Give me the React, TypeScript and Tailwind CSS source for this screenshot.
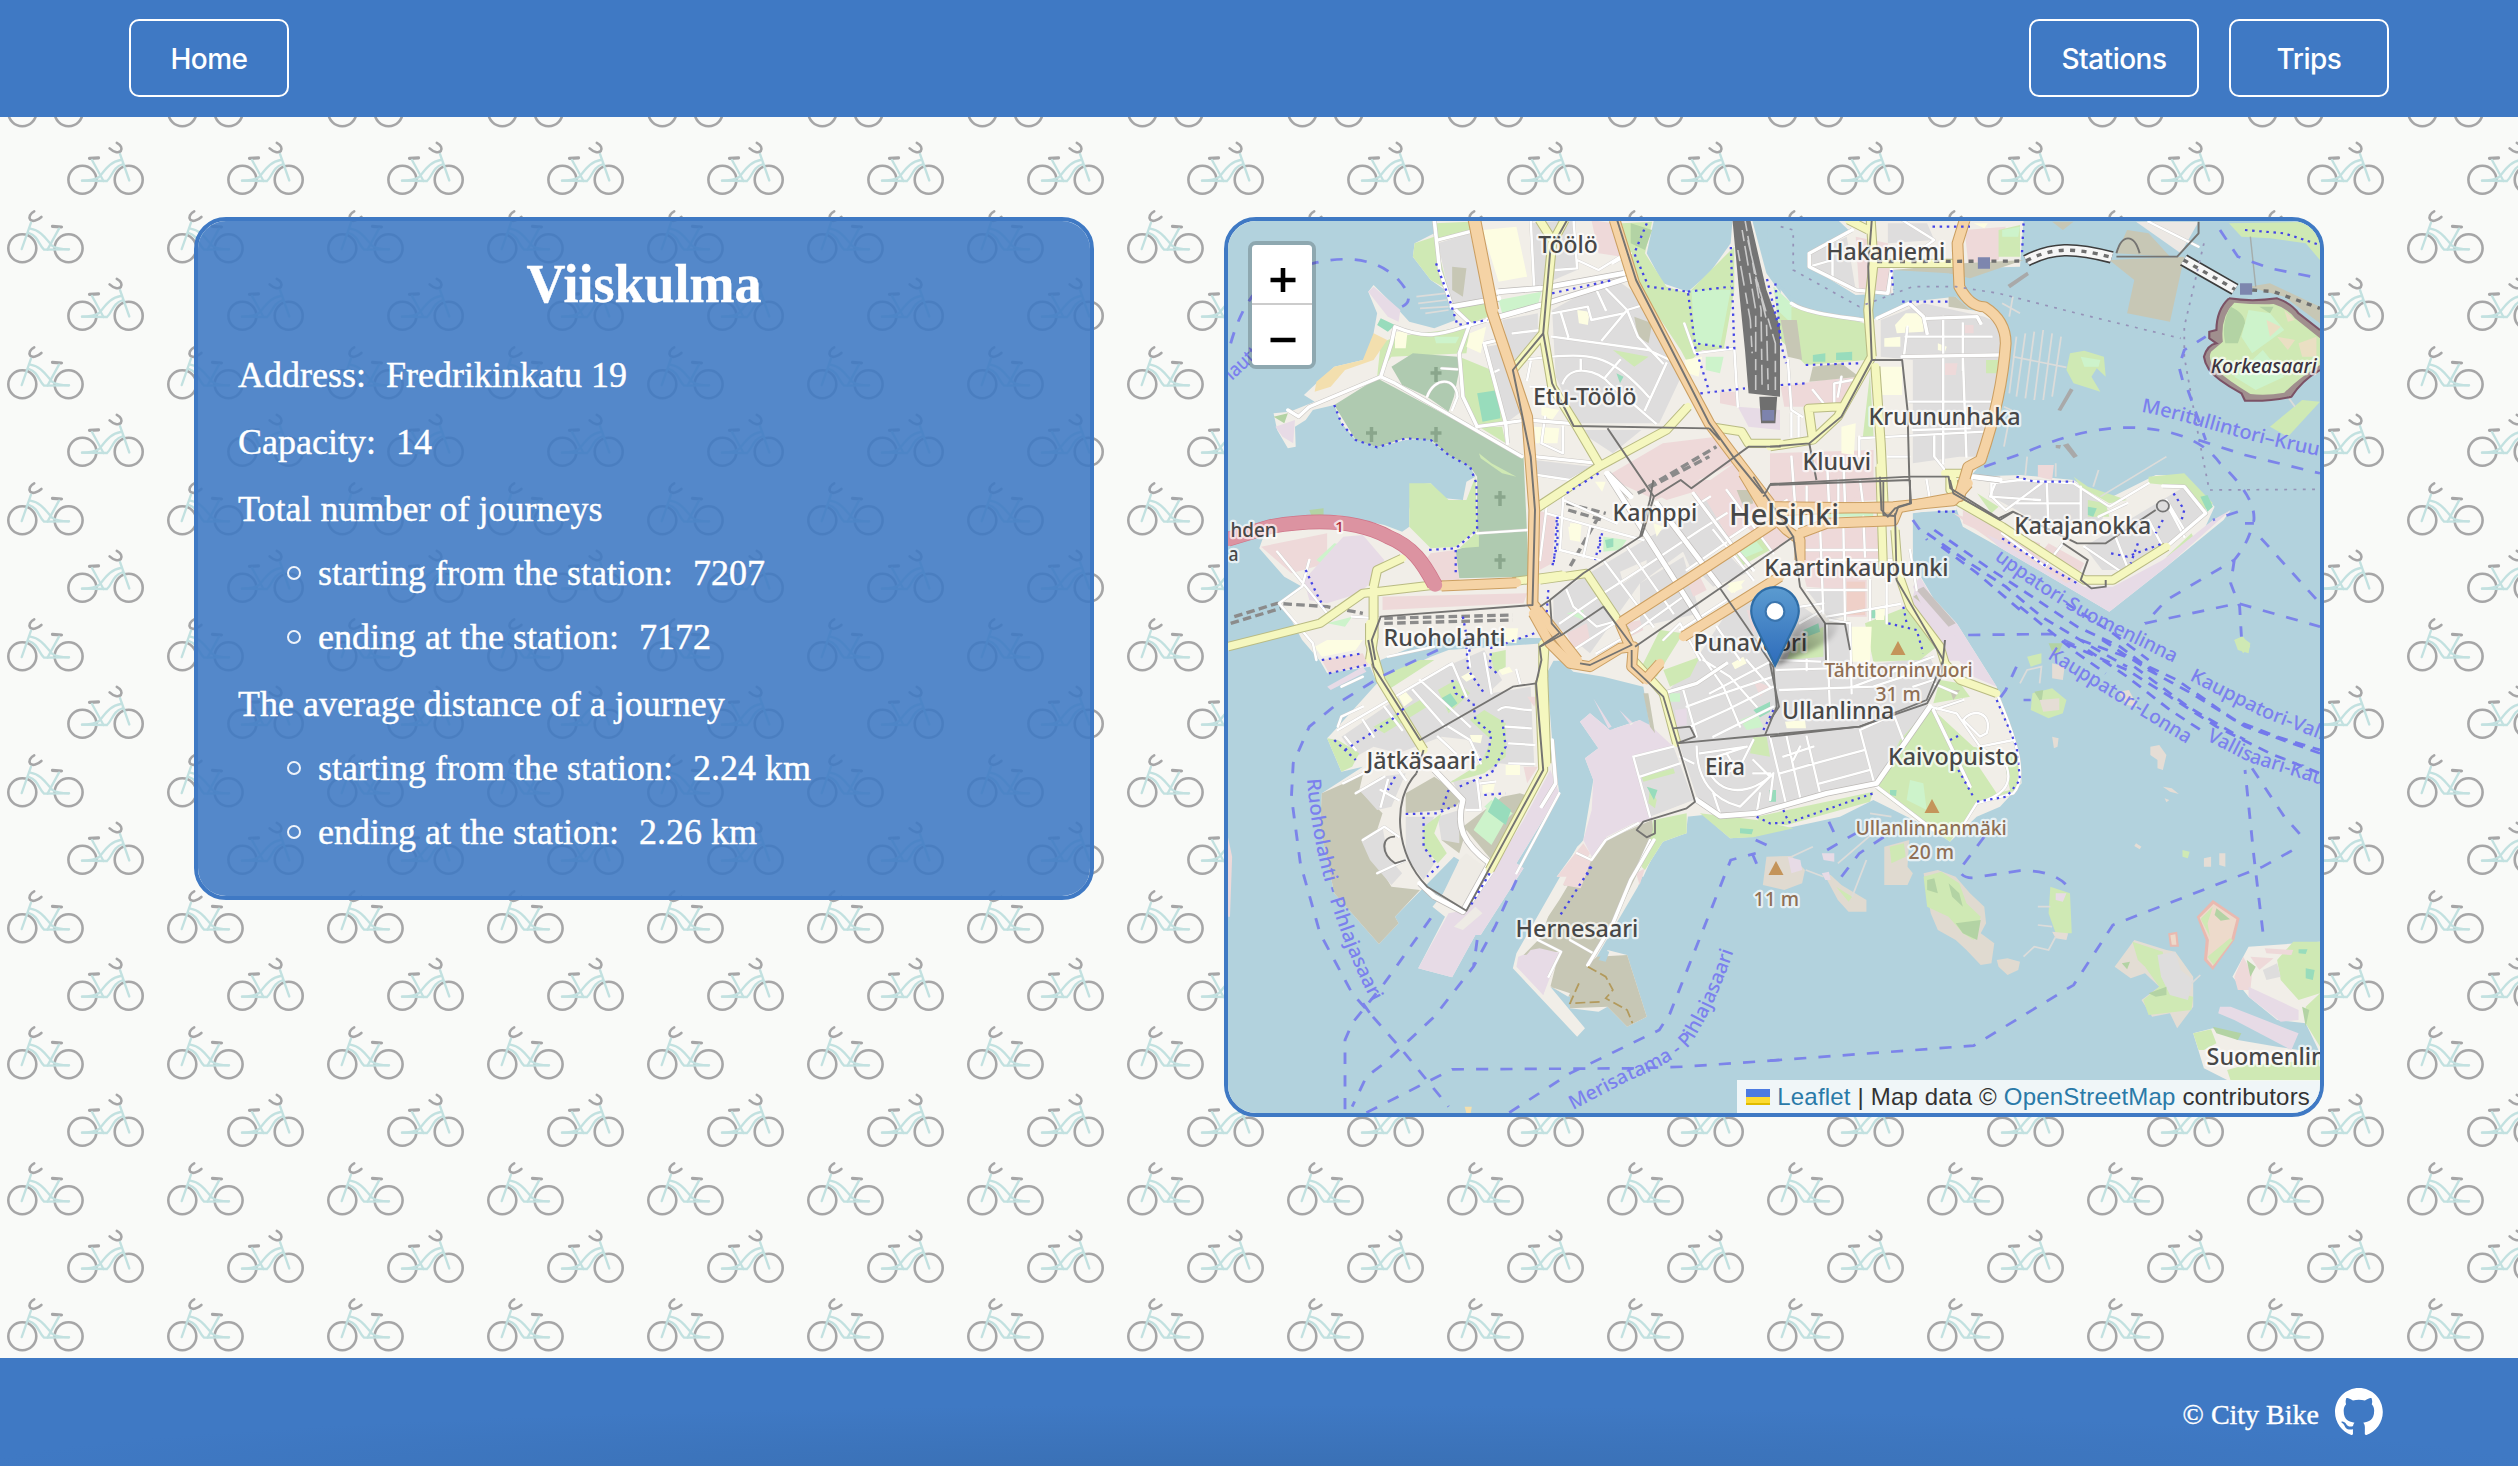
import React from "react";

/* ------------------------------------------------------------------ */
/* Bicycle wallpaper                                                   */
/* ------------------------------------------------------------------ */

function Bicycle({ transform }: { transform?: string }) {
  return (
    <g transform={transform} fill="none" strokeLinecap="round">
      <g stroke="#a6a6a7" strokeWidth="2.6">
        <circle cx="82.4" cy="43.7" r="14" />
        <circle cx="128.7" cy="43.7" r="14" />
        <path d="M89.5 22.4L98.5 21.8" strokeWidth="3.2" />
        <path d="M116.8 6.8C121 9 122.5 12.5 120.8 15C118.5 17.5 113.5 16 109.6 12.4" />
      </g>
      <g stroke="#c2e1e0" strokeWidth="2.3">
        <path d="M120 18L129.3 44.5" />
        <path d="M120.7 24C110 25.5 104.5 35 99 41C95 44 90 44.6 82 44.7" />
        <path d="M122 28.5C113 31 112.5 40 107 45L82 44.7" />
        <path d="M92 24L103.5 45" />
      </g>
    </g>
  );
}

function Wallpaper() {
  return (
    <svg className="absolute inset-0 h-full w-full" aria-hidden="true">
      <defs>
        <pattern id="bikes" x="0" y="-117" width="160" height="136" patternUnits="userSpaceOnUse">
          <rect width="160" height="136" fill="#f9faf8" />
          <Bicycle />
          <Bicycle transform="translate(151 68.6) scale(-1 1)" />
        </pattern>
      </defs>
      <rect width="100%" height="100%" fill="url(#bikes)" />
    </svg>
  );
}

/* ------------------------------------------------------------------ */
/* Map data: every sheet has its own local coordinate system           */
/* ------------------------------------------------------------------ */

type Sheet = "nw" | "ne" | "sw" | "se" | "c";
const SHEETS: Record<Sheet, string> = {
  nw: "translate(1220 210) scale(.35714 .33333)",
  ne: "translate(1770 210) scale(.35714 .33333)",
  sw: "translate(1220 640) scale(.35714 .33333)",
  se: "translate(1770 640) scale(.35714 .33333)",
  c: "translate(1540 480) scale(.33333)",
};

const WATER = "#b2d2dd";
const LAND = "#f1eee8";
const TOWN = "#dedddd";
const SHOP = "#eed9d9";
const PARK = "#cfe9b4";
const LAWN = "#cdf3cb";
const WOOD = "#b3d3a4";
const GRAVE = "#afcab0";
const PORT = "#e7dbe6";
const BARE = "#c7c7b5";
const PITCH = "#98dcbc";
const SCHOOL = "#fdfde2";
const SAND = "#f3dfae";

type Area = [Sheet, string, string];

const AREAS: Area[] = [
  // mainland
  ["nw", LAND, "M600 30L600 70 545 100 540 140 590 210 630 240 650 290 660 330 600 355 530 335 500 300 430 225 415 245 440 310 430 370 440 400 400 450 320 470 270 520 235 555 265 575 195 605 150 610 160 660 190 715 212 710 210 650 240 630 260 600 320 585 340 640 380 690 440 712 520 690 580 685 640 735 700 770 715 800 690 815 680 870 630 865 590 820 545 825 530 900 530 950 510 965 460 945 330 915 200 925 120 985 110 1015 180 1100 230 1130 165 1180 200 1230 230 1290 280 1352 1568 1352 1568 30Z"],
  ["c", LAND, "M0 -200L1240 -200 1250 90 1090 100 1100 190 1130 300 1250 430 1370 620 1440 830 1445 910 1380 980 1310 1010 1230 1085 1180 1050 1080 1000 1000 960 900 1010 760 1040 640 1070 570 1075 490 1005 440 1010 440 1060 360 1080 310 1190 50 1190 130 1080 160 900 135 835 175 805 120 725 150 700 210 750 300 720 340 800 310 620 190 590 100 575 30 510 0 470Z"],
  ["ne", LAND, "M190 30L220 60 110 130 110 170 240 255 345 250 345 180 700 170 710 30Z"],
  ["ne", LAND, "M0 200L60 280 140 310 250 335 300 325 390 275 520 260 560 300 640 310 670 370 670 450 640 600 610 740 560 800 700 795 850 810 940 870 1080 795 1160 795 1245 890 1215 960 1290 900 1270 930 1110 1070 950 1205 640 1010 540 950 520 890 400 910 400 1060 560 1352 0 1352Z"],
  ["sw", LAND, "M225 -40L300 100 420 80 440 130 330 260 300 295 340 395 400 380 285 460 280 560 320 760 445 912 500 850 490 830 655 650 670 660 640 740 595 800 630 830 555 985 650 1012 715 885 730 885 850 685 830 670 950 460 930 300 915 100 950 30 900 -40Z"],
  ["sw", LAND, "M1205 300L1115 270 1045 470 1025 595 1000 620 830 940 820 985 1000 1190 1022 1165 925 1040 980 1070 980 1105 1060 1115 1085 1100 1140 1160 1195 1130 1140 945 1085 930 1080 965 1055 950 1170 740 1190 690 1240 605 1305 580 1310 530Z"],
  ["nw", WATER, "M1215 30L1195 130 1240 220 1310 245 1370 190 1430 100 1435 30ZM1490 30L1530 190 1570 250 1570 30Z"],
  ["ne", WATER, "M-10 30L0 190 60 260 130 295 250 325 250 265 100 180 100 130 200 60 190 30Z"],
  ["sw", WATER, "M430 130L590 50 640 30 905 10 905 -6 600 -6 450 60ZM1045 170L1105 270 1090 280Z"],

  // town blocks, north-west
  ["nw", TOWN, "M610 100L700 70 745 260 650 290ZM870 40L985 30 1000 180 880 235ZM930 300L1100 200 1200 280 1300 480 1230 640 1000 640 940 500ZM745 410L800 400 850 600 800 640ZM790 330L890 310 890 370 820 460ZM1000 660L1180 660 1100 730ZM880 750L1040 770 980 810 890 800Z"],
  ["nw", SHOP, "M1040 30L1100 40 1125 140 1060 130ZM1400 545L1450 545 1450 590 1400 580ZM1080 800L1240 700 1390 680 1440 760 1220 870ZM890 900L940 920 930 1060 895 1080ZM560 1070L590 1030 660 1020 670 1110 600 1115ZM455 1160L860 1150 850 1180 455 1200ZM115 1010L300 970 300 1060 200 1090ZM1320 850L1440 760 1520 870 1380 960Z"],
  ["nw", PARK, "M600 40L700 35 700 65 610 85ZM545 100L600 80 640 240 590 210 540 140ZM650 280L740 270 750 320 700 340ZM490 380L700 350 690 430 480 440 440 500 450 400ZM670 440L760 480 800 640 720 650 680 560ZM1125 40L1210 35 1190 130 1250 230 1310 250 1440 110 1440 240 1410 420 1350 420 1310 460 1290 420 1160 210ZM530 820L590 820 640 870 690 870 715 800 720 960 660 1010 590 1015 530 950ZM1100 420L1200 440 1160 470ZM725 650L790 650 800 700Z"],
  ["nw", LAWN, "M780 270L900 245 890 285 790 310ZM1320 240L1430 240 1400 410 1330 400ZM270 1050L320 1000 345 1005 290 1065ZM600 380L670 380 660 400 605 400ZM1360 440L1410 440 1400 490 1360 480ZM300 1240L370 1220 350 1250Z"],
  ["nw", WOOD, "M1150 40L1210 60 1190 120 1150 100ZM250 900L290 895 290 915 255 915ZM150 620L190 610 180 640ZM760 130L810 120 835 190 790 170Z"],
  ["nw", GRAVE, "M480 470L540 430 665 440 670 480 655 560 640 605 580 560 510 525ZM320 585L440 505 850 740 865 1100 670 1105 660 1020 720 1000 720 800 700 770 640 735 590 690 520 685 440 712 380 690Z"],
  ["nw", PARK, "M725 730L760 760 830 800 790 790 730 745ZM670 1015L725 960 725 1010Z"],
  ["nw", SAND, "M430 370L468 390 430 450 350 480 310 530 265 545 270 515 320 470 400 450Z"],
  ["nw", PORT, "M430 230L505 300 500 335 470 320 415 245ZM235 1110L345 980 400 975 460 1050 430 1110 390 1150 300 1180 250 1170ZM155 650L210 630 205 700 175 680ZM1450 590L1568 600 1568 660 1480 650Z"],
  ["nw", PITCH, "M720 550L780 540 785 625 735 635ZM450 325L490 345 470 365 440 345ZM1110 490L1130 500 1120 520Z"],
  ["nw", SCHOOL, "M735 60L830 50 860 200 780 215ZM490 365L525 365 520 415 490 415ZM700 370L745 350 730 430 690 410ZM880 650L950 655 945 700 885 700ZM900 590L950 600 930 630 900 615ZM1300 450L1350 440 1340 500 1310 490ZM1000 300L1035 305 1030 345 1005 340ZM975 950L1010 950 1005 990 980 990ZM800 1255L835 1255 830 1300 795 1295ZM1420 1120L1470 1110 1440 1150ZM1050 815L1080 815 1070 845Z"],
  ["nw", BARE, "M650 170L690 175 680 260 650 240ZM1160 320L1210 340 1200 400 1170 380Z"],

  // central districts
  ["c", TOWN, "M130 290L330 170 640 0 640 60 300 310 150 520 40 430 40 350ZM300 310L430 230 480 400 300 440ZM380 640L480 520 560 400 700 320 860 430 930 430 940 560 1170 530 1200 600 1160 660 1160 700 1010 900 860 940 740 980 640 1000 540 1000 470 950 420 800ZM280 830L400 800 460 960 330 1010ZM800 330L910 330 910 410 870 420Z"],
  ["c", TOWN, "M390 130L500 60 570 180 450 260ZM480 280L560 220 620 280 520 320Z"],
  ["c", SHOP, "M340 40L480 0 640 0 760 160 700 220 620 140 570 180 480 30 380 60ZM740 0L1010 0 1010 60 740 80ZM790 150L1010 140 1020 240 920 330 800 320 780 240ZM920 300L980 300 980 410 920 410ZM80 460L140 430 150 480 100 510ZM255 430L300 420 310 450 270 470ZM440 300L480 290 500 330 460 350ZM620 390L680 400 640 460ZM1240 100L1500 190 1500 260 1380 200ZM640 600L690 620 660 650ZM50 1190L130 1090 150 1120 110 1190Z"],
  ["c", PARK, "M580 210L650 160 690 210 610 255ZM975 430L1100 380 1190 500 1140 540 1000 545ZM1170 680L1300 800 1440 830 1430 930 1310 970 1230 1085 1010 930 1080 780ZM650 1010L1000 935 990 965 740 1035 660 1030ZM480 1000L650 1020 760 1045 640 1072 570 1075ZM340 1020L440 1000 440 1060 360 1080 310 1160ZM360 450L430 460 380 540 350 590 300 570ZM1200 600L1260 610 1290 650 1180 670ZM640 770L680 770 690 830 630 820ZM370 570L480 530 450 590 390 620ZM760 490L850 440 850 530 740 540Z"],
  ["c", LAWN, "M590 215L650 185 670 210 610 235ZM1110 900L1150 910 1160 990 1100 960ZM600 720L650 700 670 740 620 750ZM390 640L420 640 420 665 390 665ZM190 170L260 180 240 210 190 215ZM80 400L130 390 130 420ZM860 95L1000 95 1000 110 860 110ZM335 845L370 840 360 860Z"],
  ["c", PITCH, "M640 690L690 665 690 695 660 712ZM790 450L835 430 840 455 800 470ZM600 1045L640 1048 635 1063 600 1060ZM1050 930L1070 930 1068 948 1050 945ZM195 180L220 175 220 200 200 205ZM688 930L708 930 708 965 688 965ZM990 385L1010 385 1005 415 990 415ZM335 930L350 930 345 950Z"],
  ["c", SCHOOL, "M930 440L995 440 990 545 930 545ZM1005 385L1035 385 1032 420 1008 420ZM575 550L610 530 620 550 585 568ZM735 725L795 720 798 745 740 745ZM560 325L600 305 608 325 575 340ZM90 130L125 130 120 185 90 180ZM340 130L370 140 350 170Z"],
  ["c", PORT, "M340 1020L330 1000 280 830 400 800 330 735 300 720 210 750 150 700 120 725 175 805 135 835 160 900 155 990 130 1080 160 1140 200 1070 280 1030ZM1130 310L1250 430 1370 620 1300 590 1210 490 1110 380ZM405 690L440 685 440 735 410 740ZM160 655L215 740 205 745ZM238 690L280 730 272 736Z"],
  ["c", TOWN, "M282 832L400 802 458 960 330 1008Z"],
  ["c", PARK, "M305 890L400 865 405 880 310 905ZM330 920L350 960 345 985 325 970Z"],
  ["c", BARE, "M1120 350L1150 330 1225 410 1210 420ZM1230 630L1260 630 1240 660ZM310 640L325 640 345 760 330 740ZM590 30L630 30 640 70 610 80Z"],
  ["c", "#efd0c8", "M920 305L975 305 975 405 920 405Z"],
  ["c", LAND, "M1240 700L1330 660 1400 730 1390 790 1320 790ZM1310 850L1390 830 1410 930 1370 940ZM240 275L320 240 320 260 250 310Z"],

  // north-east
  ["ne", TOWN, "M115 130L215 80 240 240 120 175ZM330 40L440 40 460 90 330 100ZM310 330L430 280 600 320 640 340 650 440 600 740 530 740 400 760 400 450 310 440ZM620 815L700 810 850 820 940 890 930 930 780 960 690 900 620 860ZM880 1010L1160 830 1220 900 1100 1020 1000 1080 930 1080Z"],
  ["ne", SHOP, "M240 80L330 100 340 250 250 250ZM545 60L660 50 640 150 555 160ZM0 730L290 720 290 860 0 880ZM150 510L250 500 190 590 40 590 30 530ZM490 460L525 460 520 495 490 495ZM545 345L570 345 570 370 545 370ZM750 765L795 765 790 810 750 800Z"],
  ["ne", PARK, "M10 230L60 290 250 335 290 350 270 450 100 465 30 390ZM640 60L700 45 700 140 640 140ZM1060 800L1160 790 1240 880 1215 900 1160 830 1060 820ZM850 800L890 830 1000 870 950 880 870 830ZM580 850L640 890 620 910ZM1110 1040L1180 970 1190 990 1130 1050ZM280 490L260 680 290 680ZM840 430L880 422 935 440 940 500 915 475 900 500 925 545 850 520 830 480ZM605 450L640 450 635 490 605 490ZM890 870L940 880 950 920 890 920Z"],
  ["ne", LAWN, "M650 60L700 50 695 80 650 80ZM870 440L925 450 920 470 880 470ZM10 230L60 280 60 340 20 300Z"],
  ["ne", PITCH, "M120 435L155 430 155 455 120 455ZM185 428L230 425 230 450 185 450ZM1205 860L1225 855 1240 890 1225 905ZM890 890L915 895 905 920 890 915Z"],
  ["ne", SCHOOL, "M350 345L380 310 430 310 430 365 355 370ZM310 470L370 470 370 555 310 555ZM320 385L365 380 365 410 320 410ZM200 650L240 640 235 735 200 730ZM470 400L495 410 490 425 470 420ZM570 40L610 40 600 55Z"],
  ["ne", BARE, "M950 150L1160 140 1120 335 1000 310 1020 210ZM345 180L540 160 710 150 560 205 500 190ZM120 470L200 460 250 500 110 515ZM970 130L1000 60 1060 70 1120 140ZM1340 230L1400 220 1540 290 1540 340 1440 260ZM500 260L520 260 560 300 500 290ZM790 35L850 35 820 60ZM30 330L75 330 90 450 50 440Z"],
  ["ne", "#ece8e4", "M1025 35L1200 35 1150 130Z"],
  ["ne", "#a9a9a9", "M665 225L720 185 725 195 672 235ZM805 600L840 535 850 540 815 603ZM820 705L835 700 862 738 850 745ZM800 705L815 705 812 716 800 714Z"],
  ["ne", PORT, "M560 920L640 1010 950 1205 1110 1070 1290 900 1240 930 1100 1050 960 1130 880 1130 700 1010 600 940ZM420 1100L560 1352 500 1352 400 1130Z"],
  ["ne", SHOP, "M540 900L640 960 770 1060 850 1110 830 1120 640 990 540 940ZM780 1000L880 1060 860 1100 750 1040Z"],
  ["ne", PARK, "M1285 40L1540 35 1540 150 1500 100 1400 85 1320 80ZM1400 650L1490 570 1540 575 1450 680ZM1300 1290L1320 1280 1345 1300 1340 1330 1310 1320Z"],
  ["ne", "#c9c2c0", "M410 1140L430 1130 520 1240 500 1250Z"],

  // Korkeasaari
  ["ne", "#a08f8e", "M1285 265Q1350 276 1420 265Q1460 280 1480 310L1540 360 1540 480Q1490 510 1460 560Q1400 575 1330 572L1320 550Q1285 530 1260 510Q1220 480 1215 440Q1225 405 1250 400L1230 385 1230 365 1250 360Q1250 300 1285 265Z"],
  ["ne", PARK, "M1300 278Q1360 284 1410 282Q1450 295 1470 325L1540 385 1540 465Q1480 505 1440 548Q1390 558 1345 552Q1280 510 1245 475Q1225 445 1235 425L1268 395Q1260 320 1300 278Z"],
  ["ne", WOOD, "M1290 290Q1330 310 1330 340L1310 400 1275 400Q1262 340 1290 290ZM1370 290L1410 290 1400 310ZM1250 450L1290 480 1270 485Z"],
  ["ne", LAWN, "M1340 300L1400 310 1440 360 1350 430 1320 380ZM1380 420L1440 500 1360 540 1300 500Z"],
  ["ne", "#eadfc3", "M1390 330L1430 350 1400 380ZM1420 380L1470 390 1450 420ZM1440 300L1470 330 1450 335ZM1480 400L1530 380 1530 440 1490 440Z"],

  // Jätkäsaari and Ruoholahti
  ["sw", BARE, "M285 460L400 405 390 450 455 520 440 570 400 600 480 740 560 750 490 830 500 850 445 912 320 760 280 560ZM520 460L600 410 680 470 660 500 620 510 520 520ZM520 220L550 200 590 250 570 280ZM790 470L840 460 870 470 760 660 690 570 670 640 620 600 680 560Z"],
  ["sw", TOWN, "M340 290L640 70 760 160 870 140 880 380 780 370 760 400 700 300 620 290 500 340 430 320 380 350ZM560 120L610 90 740 30 790 120 680 230ZM390 450L450 410 520 400 480 500 440 510ZM520 530L600 530 570 600 600 670 570 720 520 650ZM395 600L455 560 470 650 510 700 480 735 420 660ZM610 530L670 510 670 610 620 600ZM650 420L720 420 730 510 690 510Z"],
  ["sw", SHOP, "M285 60L400 40 415 75 305 100ZM850 380L890 380 860 430ZM860 170L890 170 880 200Z"],
  ["sw", PARK, "M300 295L330 300 390 340 370 380 340 395ZM740 210L800 250 800 350 740 400 640 430 730 370 760 300 700 240ZM570 560L620 520 600 580 635 640 610 670 570 620ZM430 260L560 180 580 200 460 280ZM610 150L660 120 700 160 640 220ZM755 40L800 30 800 80 770 100ZM450 110L560 60 600 60 470 150Z"],
  ["sw", LAWN, "M710 570L750 500 800 540 760 615ZM760 480L820 520 800 540 740 500Z"],
  ["sw", PITCH, "M620 175L645 160 665 190 640 210ZM770 470L815 510 800 555 750 515ZM1195 440L1225 450 1215 480Z"],
  ["sw", SCHOOL, "M265 20L300 0 400 0 380 30 285 50ZM500 170L520 155 540 180 515 200ZM700 285L735 285 730 310 705 305ZM675 110L700 95 715 110 690 125ZM800 375L840 375 840 405 800 405ZM735 435L770 430 765 455 735 460ZM780 90L810 80 820 95 790 105Z"],
  ["sw", PORT, "M830 670L950 460 925 390 850 540 760 700 720 740 690 810 640 820 555 985 650 1012 715 885 730 885 850 685ZM300 140L400 80 410 95 310 150ZM835 950L900 925 950 940 905 1065 830 980Z"],
  ["sw", "#eeebe5", "M690 640L740 680 680 800 620 770 670 660ZM655 860L715 800 735 820 680 870Z"],
  ["sw", BARE, "M1080 600L1210 540 1215 600 1100 850 1030 975 1055 950 1140 945 1195 1130 1140 1160 1085 1100 980 1105 980 1070 925 1040 950 935 850 945 900 890 940 760 1040 660Z"],
  ["sw", LAND, "M925 1040L980 1060 975 1070 920 1035ZM895 830L940 740 975 735 950 780 900 860Z"],
  ["sw", PORT, "M895 925L955 940 920 1010 905 1065 835 975 870 930Z"],
  ["sw", WATER, "M1060 960L1075 930 1090 935 1080 965Z"],
  ["sw", SHOP, "M960 735L1000 640 1040 660 1010 745ZM1165 700L1190 685 1175 735ZM22 590L34 650 28 830 22 830Z"],
  ["sw", PARK, "M1215 560L1305 530 1305 580 1240 605 1190 690 1180 680Z"],
  ["sw", SAND, "M685 1400L705 1400 702 1420 690 1420Z"],

  // southern archipelago
  ["se", "#e0dad0", "M430 700L470 690 520 710 560 760 600 800 605 850 590 880 628 910 620 970 590 975 550 930 520 900 470 870 450 820ZM635 960L665 955 700 965 695 990 665 1005 640 980ZM320 620L390 600 385 680 400 700 385 735 320 735ZM-10 650L60 648 98 690 90 730 40 750 -20 735ZM150 700L170 705 200 735 270 780 270 815 220 815 190 780Z"],
  ["se", PARK, "M430 710L480 695 530 730 550 790 590 830 570 900 540 880 500 830 440 800ZM335 620L375 610 380 650 340 670ZM185 740L230 770 220 785ZM785 740L840 760 845 880 800 880 780 820ZM735 160L790 145 830 180 820 220 780 235 730 210ZM720 50L760 40 760 70 730 80Z"],
  ["se", WOOD, "M440 720L460 715 470 760 440 750ZM520 850L590 840 580 900 540 880ZM500 730L530 760 540 800 510 770ZM740 155L765 150 760 190ZM780 10L820 10 800 60Z"],
  ["se", PORT, "M50 650L85 660 90 690 60 700ZM145 640L180 640 180 665 150 660ZM145 700L165 695 170 720 155 720ZM800 760L830 760 820 785 800 780Z"],
  ["se", "#e5ddd5", "M790 70L825 80 820 120 790 115ZM755 180L810 175 810 210 765 215ZM790 290L808 295 805 320 795 325ZM1065 320L1090 315 1110 345 1100 390 1085 385 1085 360 1065 345ZM1025 610L1040 620 1035 628 1020 618ZM1215 655L1235 650 1235 680 1215 680ZM1258 640L1275 640 1275 680 1258 675ZM1105 475L1118 480 1110 487ZM790 875L835 880 830 900 800 895ZM975 155L1005 150 1030 200 1000 195ZM1100 440L1125 445 1145 462 1120 455Z"],
  ["se", PARK, "M1155 630L1175 635 1170 655 1155 650ZM1300 0L1325 -10 1345 20 1325 40Z"],
  ["se", "#e3ddd4", "M965 980L1020 900 1110 930 1135 935 1185 1010 1185 1100 1140 1165 1120 1120 1070 1130 1040 1080 1090 1040 1050 1000 1010 1015Z"],
  ["se", PARK, "M1015 905L1100 935 1100 1000 1140 1060 1185 1070 1180 1110 1060 1125 1045 1080 1090 1040 1050 980 1030 960Z"],
  ["se", TOWN, "M1085 945L1135 935 1150 990 1185 1020 1170 1080 1120 1065 1095 1010Z"],
  ["se", WOOD, "M1060 1060L1110 1040 1110 1065 1080 1070ZM985 970L1008 965 1000 988Z"],
  ["se", "#e9b9b0", "M1195 830L1240 780 1315 835 1300 900 1240 990 1215 960 1220 900ZM1115 880L1140 875 1145 920 1120 920Z"],
  ["se", "#eddacb", "M1203 833L1242 792 1306 838 1292 896 1240 978 1224 958 1229 900ZM1121 886L1135 883 1138 914 1125 914Z"],
  ["se", WOOD, "M1250 805L1288 838 1262 842 1245 825Z"],
  ["se", PARK, "M1206 836L1240 800 1225 850 1232 890ZM1225 950L1288 895 1296 900 1242 975Z"],
  ["se", LAND, "M1295 1010L1340 920 1540 905 1540 1240 1500 1150 1420 1140 1340 1070ZM1185 1180L1240 1165 1310 1200 1420 1220 1540 1240 1540 1320 1280 1320 1215 1285Z"],
  ["se", PARK, "M1420 960L1465 905 1540 905 1540 1060 1480 1080 1430 1020ZM1185 1180L1235 1168 1250 1210 1215 1230 1200 1230ZM1280 1290L1330 1275 1540 1260 1540 1322 1290 1322ZM1500 1100L1540 1060 1540 1220 1500 1150Z"],
  ["se", SHOP, "M1300 1010L1325 950 1350 1000 1345 1050 1310 1050ZM1345 950L1410 955 1370 990ZM1385 925L1465 930 1460 945 1390 940Z"],
  ["se", PORT, "M1260 1100L1290 1100 1480 1180 1460 1230 1300 1140 1255 1120ZM1340 1040L1480 1110 1480 1140 1430 1145 1340 1070Z"],
  ["se", TOWN, "M1380 990L1420 970 1430 1010 1390 1020Z"],
  ["se", PITCH, "M1500 985L1525 990 1520 1020 1500 1015ZM1480 928L1505 928 1500 942 1480 940Z"],
  ["se", WOOD, "M1240 1160L1320 1180 1310 1200 1250 1180ZM1335 960L1360 980 1345 1010ZM1490 1100L1510 1110 1500 1160Z"],
];

type RoadKind = "motorway" | "primary" | "secondary" | "avenue" | "street" | "lane";
const ROAD_STYLE: Record<RoadKind, { core: string; edge: string; w: number; pad: number }> = {
  lane: { core: "#ffffff", edge: "#cfcdcb", w: 7, pad: 2 },
  street: { core: "#ffffff", edge: "#c9c6c3", w: 10, pad: 3 },
  avenue: { core: "#ffffff", edge: "#bdbab7", w: 15, pad: 4 },
  secondary: { core: "#f5f7bf", edge: "#b9bb83", w: 22, pad: 6 },
  primary: { core: "#f5d3a5", edge: "#cb9f62", w: 27, pad: 6 },
  motorway: { core: "#dc93a1", edge: "#cf7488", w: 40, pad: 4 },
};
const ROAD_ORDER: RoadKind[] = ["lane", "street", "avenue", "secondary", "primary", "motorway"];

const ROADS: [Sheet, RoadKind, string][] = [
  ["nw", "street", "M600 30L615 180 650 290 700 340 670 430 680 560 720 650"],
  ["nw", "avenue", "M650 290L780 265M780 245L900 235 1130 190M750 330L900 285 1140 205"],
  ["nw", "street", "M750 330C640 360 600 400 490 350L480 400 450 500 250 590 220 620 190 600M450 500L490 520 845 740M720 650L860 630 980 640M740 400L760 480 800 640 805 700M740 400L780 390M880 740L1060 760M610 90L700 65"],
  ["nw", "lane", "M580 560C600 500 660 500 665 560L650 600M870 30L880 240M990 30L1000 175 940 180M1000 150L1060 180 1120 140M930 310L1030 290 1040 330 1130 310M930 380L1200 420 1280 460M955 310L975 380M1080 235L1140 300 1070 390M1140 300L1200 280M1140 300L1170 380 1240 460M930 440C1050 430 1100 440 1200 560M960 520C980 460 1060 480 1090 520L1220 640M1250 460L1190 600M860 790L980 810 1060 760M720 970L860 960M870 530L930 530M620 475L665 478M1120 450L1080 500M760 490L780 480M820 370L900 360M840 450L930 440M910 620L900 700 960 730 960 650M1300 340L1330 430 1440 415 1450 590M870 455L860 510M1010 450L1010 480M160 1025L240 1130 300 1210M165 1180L230 1130 250 1050M165 1180L260 1300 270 1350M370 1220L450 1225M1150 130L1100 160M1050 230L1080 300"],
  ["nw", "avenue", "M1085 790L1150 860"],
  ["nw", "secondary", "M965 30L930 100 905 370 820 480M905 370L930 530 1000 650 1060 760M895 30L930 90M890 890L1060 770 1250 660 1310 590M22 1310L280 1240 400 1150 600 1125 640 1128M430 1140L430 1280 420 1350M430 1130L440 1080 510 1045M1370 650L1460 665 1480 700 1570 700M820 1115L960 1095"],
  ["nw", "primary", "M710 30L760 300 860 620 880 900 875 1180 1000 1350M715 30L765 300M1105 30L1160 220 1370 640 1440 740 1540 880M620 1128L830 1118"],
  ["nw", "motorway", "M22 988L140 950C300 920 400 940 470 980C540 1010 570 1060 602 1125"],

  ["c", "avenue", "M200 -20L340 200 480 420M350 70L540 320M470 960L540 1008 650 1000 860 940 1010 910 1170 680M1300 -10L1380 0"],
  ["c", "street", "M460 40L580 200 640 270M1010 920L1180 1050M370 640L470 610 560 550M1180 690L1290 920"],
  ["c", "lane", "M60 430L190 340 330 250 480 150 560 100M170 520L290 450 430 350M100 510L270 400M400 120L510 50M190 240L340 440M80 330L100 380 170 440 240 420M230 130L70 60M260 200L400 400M440 270L570 180M560 180L740 60M520 150L640 300M560 30L700 220M20 100L160 140 310 180M150 140L130 230M60 210L180 240M70 50L60 210M0 240L20 80M1370 0L1350 50 1500 60M370 480L420 430 480 540M480 520L550 620 600 740M510 640L700 540M440 680L520 650 700 590M450 740L560 690 700 620M430 630L470 770M490 540L570 590 650 680M620 540L690 620M520 770L700 680M530 440L600 540M420 450L560 360"],
  ["c", "lane", "M710 570L870 565M720 630L1000 620 1180 560M940 620L1180 530M860 430L870 700M930 430L935 640M800 540L800 570M720 540L840 545M690 770L740 980M740 770L780 950M800 770L840 940M720 880L825 850 975 810M840 910L990 870M730 830L820 800M960 750L1000 900M1060 700L1090 780M640 780L600 860M560 820C600 880 560 900 530 830L620 800M470 800C470 900 520 960 600 980L690 890 640 840M500 860C540 960 640 940 700 880M640 880L690 880M480 820L620 800M540 1000L520 940M660 940L650 1000M700 880L690 960M460 850L420 830M760 840L780 800M1070 700L960 750M1120 620L1180 600"],
  ["c", "lane", "M1170 680L1250 700 1320 800 1400 860C1420 920 1380 950 1310 970L1260 1050M1370 640C1440 800 1460 900 1420 940L1310 970M1270 720C1300 680 1360 700 1340 760L1320 770 1270 720M1180 690L1270 660M1320 800L1420 780M1180 610L1250 640M840 130L850 400M970 110L975 230M910 130L915 420M780 210L1020 210M850 240L1080 240M800 330L980 330M990 300L990 420M1040 300L1040 430M860 410L1080 372M800 20L800 80M895 0L895 70M960 0L970 80M1160 0L1170 60M780 380L850 370M870 420L930 430M280 830L400 800M300 890L420 850M280 830L330 1010M330 1080L280 1190M1110 210L1130 330M780 430L850 390"],
  ["c", "secondary", "M0 300L140 280 260 460M-10 85L90 20M1020 -40L1025 120 1030 270M1065 150L1075 280 1110 380 1200 500 1215 550 1260 600 1370 640M280 540L370 640 410 790M15 490L10 570 15 700 20 850M1240 0L1240 40"],
  ["c", "primary", "M245 425L440 300 700 130M320 595L360 550M430 470L560 390 720 290M-20 400L30 490 90 550 150 560 240 505 280 500 275 560 320 600M610 -20L670 80 740 150 780 180 780 240M240 430L270 500M720 92L880 85 1060 80 1240 62 1285 10M780 160L860 130 1060 122 1075 85"],

  ["sw", "lane", "M345 430L420 390M380 460L460 410M330 270L650 70 690 170M400 240L430 290M460 200L510 270M540 150L630 260M560 120L700 260M610 290L660 340M740 40L760 160M640 260L700 300 730 370M780 210C800 190 820 210 870 210M800 260L870 265M810 310L880 315M810 370L880 372M330 260L340 230 400 200M350 290L380 330M500 390L520 420M450 450L500 480M470 420L450 500M720 420L730 510 690 510M730 430L770 425M400 600L460 560 500 590M440 700L520 660M830 90L840 130M690 0L700 80M470 50L600 20M690 810L760 700M1000 640L1040 660 1080 600 1170 550M890 900L955 935 920 1010M980 900L1045 940M340 140L400 110M950 460L830 700"],
  ["sw", "street", "M1215 600L1150 720 1100 850 1030 975M930 300L940 430 900 500"],
  ["sw", "avenue", "M600 390L680 480C660 560 680 610 755 670L680 815 600 770 560 730"],
  ["sw", "secondary", "M420 -50L420 10 450 120 570 330M905 10L905 110 895 130 905 390 755 690"],

  ["ne", "street", "M370 440L640 435M60 280C100 310 200 320 260 330M300 325L390 280 430 320 440 370M440 325L580 320 590 340M110 130L110 170 240 240 330 250 340 180M230 60L110 130"],
  ["ne", "lane", "M485 320L485 760M540 340L540 480M380 380L620 380M390 575L620 575M540 440L550 740M250 685L600 665M400 660L560 655M460 680L460 740 490 780M385 350L375 440M175 100L175 200M370 30L460 90 420 120M110 170L175 150M250 680L250 740M160 760L165 880M60 740L70 880M205 740L210 880M330 740L390 740M60 610L60 680M120 540L150 580M620 820L700 810 850 820 950 890 1060 820M760 820L660 900 620 860 620 820M775 820L780 960M870 830L870 930M690 880L870 880M960 960L1000 1070M1120 900L1160 980M1060 930L1100 1010M880 1010L990 1090M650 970L770 1070 820 1000M1000 880L920 920M1060 35L1200 110M80 680L80 620M230 510L180 520 180 590M200 500L190 560M50 450L60 600 90 620M1160 960L1110 870"],
  ["ne", "street", "M1100 828L1160 830 1220 910 1110 1010"],
  ["ne", "secondary", "M220 30L275 60M282 30L290 160 275 300 285 440M290 160L515 160M285 440L190 620 120 690 0 710M120 690L108 595 200 590M295 470L310 700 318 880M490 790L540 790M505 800L505 840 530 860M520 870L650 950 880 1110 960 1110 1110 1010"],
  ["ne", "primary", "M545 30L525 100 530 230Q560 290 600 290Q660 330 660 400Q650 560 590 750L555 770 530 860 350 895 0 890"],
];

const TRAMS: [Sheet, string][] = [
  ["nw", "M1112 30L1165 210 1370 640 1440 745 1520 850M972 30L925 120 905 370 820 480 870 740 882 900 875 1185 450 1220 425 1290 435 1350M905 370L930 520 990 648 1370 655M1085 655L1215 860 1195 930 1180 980M1215 860L1290 810 1320 835 1480 710 1570 710M1370 655L1400 690"],
  ["c", "M0 380L30 360 130 280 300 170 330 60 340 0M30 360L35 430 65 465 190 380 275 495 150 555 120 550M0 500L70 462M285 500L540 325 760 170 640 -10M760 170L780 320 855 430 858 540M540 325L620 440 700 560 710 680 675 765M410 790L680 765 960 740 1160 660 1210 540 1070 300 1065 100M275 510L275 560 370 650 400 750 465 965 440 985 310 1025 290 1050 320 1072 345 1060 345 1020M1030 0L1030 105 1065 108 1075 80 1110 70 1110 0M670 50L690 15 1110 0M855 430L915 432 930 510M400 745L450 740 465 770 410 790M1230 0L1240 40 1380 120 1420 95"],
  ["sw", "M550 400C480 480 490 640 580 740L690 812 905 390 885 130 820 140 560 300 430 80 415 0M570 330L550 400M490 590C450 590 450 640 490 670L520 660M885 130L900 60 895 20 950 -20"],
  ["ne", "M285 30L275 170 285 450 370 450 385 600 390 800 500 800 505 835 640 925 680 905 860 1000 940 1000 1080 900M285 450L200 620 110 700 0 710M110 700L130 810M0 822L390 800 395 880 350 895 330 920 312 900 308 800M820 1000L890 1050 870 1110 900 1135 940 1130 940 1110M970 140L1140 140 1200 70 1200 35M970 130C985 70 1020 70 1035 130"],
  ["se", "M490 0L480 110 440 190 250 260 0 290M0 70L25 200 0 240"],
];

const FOOTPATHS: [Sheet, string][] = [
  ["nw", "M320 585L340 640 380 690 440 712 520 685 590 690 640 735 700 770 718 820 720 960 660 1015 580 1020M605 160L640 260 665 345 750 330M1195 40L1160 130 1200 230 1310 245 1330 400 1440 415 1430 100M1310 245L1430 230M930 250L1100 210M1345 550L1470 535M1330 410L1370 545M945 920L945 1000 930 1070M1070 970L1050 1050M1060 790L970 850M660 1020L660 1100M240 1080L270 1150 290 1190M1568 370L1530 200M680 1220L700 1330M880 1270L800 1300"],
  ["c", "M50 120L45 210 40 260M180 170L180 230M1045 430L1130 450 1150 520M1230 780L1260 765M1255 870L1300 950M650 1010L690 1030 745 1028 1000 940M1370 660L1430 800 1440 900 1400 950 1310 965M1090 380L1100 430M730 990L745 1025M700 690L670 750M150 1160L140 1190M25 330L20 400"],
  ["sw", "M320 300L380 360M350 330L480 240 520 200M650 120L660 160 710 190 715 240 760 280 750 350 700 370M790 240L800 320 760 400 670 440M520 522L610 520 660 495M570 530L570 620 610 680 580 710M690 20L695 90 740 160M760 20L755 80 780 105M305 100L410 75M640 450L620 510M740 465L800 460M1040 680L950 830M490 410L470 450M755 700L700 800M285 60L400 40"],
  ["ne", "M455 50L560 50M710 40L705 140M15 220L30 400 45 460M100 465L250 460M30 525L100 520M340 180L345 240M370 275L500 275M690 800L740 815 850 815M470 905L530 905M1330 60L1440 70 1540 105M650 985L760 1060 860 1120M955 1030L1000 1040 1100 1000M1130 850L1160 900 1150 940M1100 930L1080 970M1030 1000L1010 1060"],
];

const FERRIES: [Sheet, string][] = [
  ["nw", "M30 400Q90 170 260 160Q420 120 500 210Q550 270 510 290"],
  ["sw", "M610 30L450 110 330 190 250 260 205 370 200 470 225 670 280 880 370 1060 510 1230 640 1400M590 835L460 1030 370 1150 350 1200 350 1415M830 720L770 860 710 980 600 1130 460 1270 410 1310 370 1400M410 1418L650 1288 1150 1285 1300 1280 1568 1260M810 1418L980 1300 1230 1170 1260 1120 1430 660 1500 640M720 900L710 980M400 1090L420 1120M1490 640L1510 690M1500 600L1540 620"],
  ["se", "M0 1262L570 1217 850 1035 960 855 1380 680 1490 615M1380 875L1355 650 1330 390M1350 385L1440 530 1490 590M600 590L530 690Q540 725 600 708L700 692Q790 690 830 735M200 710L250 640 320 590M160 630L240 580M165 545L180 580M690 80L660 150 640 180M710 180L730 180"],
  ["ne", "M555 1275L790 1272 860 1310M400 930L440 990M600 770L720 725Q900 640 1050 655Q1200 670 1260 760Q1360 860 1355 930Q1340 1000 1300 1050L1110 1170 1050 1240M1200 690L1330 735 1540 790M1300 1050L1290 1120 1315 1190 1320 1280M1050 1240L1310 1180 1540 1250M1375 985L1540 1180M1155 510L1145 470 1160 420 1220 380M1170 540L1220 690M1260 60L1310 140 1400 175 1540 205M1310 905L1240 930M1330 940L1355 940"],
];

const FERRY_BUNDLE: [Sheet, string][] = [
  ["ne", "M440 970L560 1060 660 1130 760 1220 900 1310 1000 1370M460 960L620 1080 720 1150 860 1250 980 1310 1080 1390M700 1190L860 1330 940 1390M830 1180L960 1270 1060 1350M480 1010L580 1090 700 1200"],
  ["se", "M830 10L1000 90 1120 170 1250 260 1400 340 1540 400M870 0L1020 60 1140 120 1260 210 1330 260 1540 340M930 0L1060 90 1180 160 1300 240 1420 290 1540 330M890 30L1000 110 1120 210 1220 280M1020 80L1170 200 1330 300"],
];

const FAINT: [Sheet, string][] = [
  ["ne", "M30 50L65 60 65 180 250 290 400 230 520 230 640 250 860 310 1150 385M1215 100L1160 350 1160 440 1200 680 1230 840 1540 838"],
];

const PIERS: [Sheet, string][] = [
  ["ne", "M680 440L830 472M690 380L670 550M715 370L690 560M740 365L715 565M765 360L740 570M790 370L765 570M815 380L790 560M925 860L1110 740M650 280L700 310M680 260L670 320M720 740L715 795M800 760L800 800M920 780L905 830M655 590L675 600 655 710M1450 560L1470 590"],
  ["nw", "M550 260L630 250M555 280L635 270M560 295L640 290M575 310L640 300"],
  ["se", "M100 690L150 710M60 650L120 620M190 670L310 560M230 770L270 660M280 520L340 530M700 130L720 90 760 80 755 130M710 950L740 920 780 930 800 890M750 855L790 860M750 800L785 800M1180 1030L1205 1005"],
];

type Label = [string, number, number, number, number?, string?, boolean?];
const DARK = "#474747";
const BROWN = "#8f6f54";
const LABELS: Label[] = [
  ["Töölö", 1538.2, 253, 59.6],
  ["Etu-Töölö", 1533, 404.6, 103.4],
  ["Kamppi", 1612.6, 521, 84.6],
  ["Helsinki", 1729, 524.8, 110, 28.5],
  ["Ruoholahti", 1383.6, 646.4, 122],
  ["Punavuori", 1693.6, 651, 113.6],
  ["Kaartinkaupunki", 1764.2, 575.8, 184.4],
  ["Ullanlinna", 1782, 718.6, 112.4],
  ["Eira", 1705, 774.6, 40],
  ["Kaivopuisto", 1888, 764.8, 130.6],
  ["Hakaniemi", 1826.2, 260.4, 119],
  ["Kruununhaka", 1868.4, 424.8, 152.2],
  ["Kluuvi", 1802.6, 470.4, 68.4],
  ["Katajanokka", 2014.2, 533.8, 137],
  ["Korkeasaari", 2210.8, 373, 106, 19, "#3c3340", true],
  ["Jätkäsaari", 1366.6, 769.4, 109.4],
  ["Hernesaari", 1515.6, 937, 122.8],
  ["Suomenlinna", 2206.6, 1064.6, 147],
  ["hden", 1230.5, 536.7, 46, 19],
  ["a", 1228.5, 560.5, 10, 19],
  ["1", 1335, 532, 9, 15, "#b03040"],
  ["Tähtitorninvuori", 1824.4, 676.9, 148.4, 19.5, BROWN],
  ["31 m", 1875.4, 700.9, 45.4, 19.5, BROWN],
  ["Ullanlinnanmäki", 1855.4, 834.5, 151.4, 19.5, BROWN],
  ["20 m", 1908.6, 858.5, 45.4, 19.5, BROWN],
  ["11 m", 1753.6, 906.2, 45.4, 19.5, BROWN],
];

const ROUTE_LABELS: [string, string, string, number][] = [
  ["route-a", "Ruoholahti - Pihlajasaari", "M1307 779C1312 850 1334 930 1372 1002", 234],
  ["route-b", "Merisatama - Pihlajasaari", "M1573 1110L1630 1080Q1672 1064 1691 1044Q1715 1006 1734 950", 238],
  ["route-c", "uppatori-Suomenlinna", "M1994 559Q2040 594 2090 622L2174 663", 208],
  ["route-d", "Meritullintori–Kruununvuori", "M2141 412C2200 422 2260 452 2420 472", 270],
  ["route-e", "Kauppatori-Lonna", "M2047 658L2122 704 2190 746", 164],
  ["route-f", "Kauppatori-Vallisaari", "M2189 680L2262 717 2420 778", 198],
  ["route-g", "Vallisaari-Kauppatori", "M2206 740L2249 762 2420 816", 194],
  ["route-h", "lauttasaari", "M1232 381L1300 318", 90],
];

const PEAKS = [[1898, 648.5], [1932, 806.5], [1776, 868.5]];
const CROSSES = [[1371.5, 434], [1436, 434], [1436, 374], [1500, 498], [1500, 561]];

function Strokes({ lines, ...style }: { lines: [Sheet, string][] } & React.SVGProps<SVGGElement>) {
  return (
    <g fill="none" {...style}>
      {lines.map(([sheet, d], i) => (
        <path key={i} transform={SHEETS[sheet]} d={d} />
      ))}
    </g>
  );
}

function MapCanvas() {
  return (
    <svg viewBox="1228 221 1092 892" className="block h-full w-full" aria-label="Map of Helsinki">
      <rect x="1228" y="221" width="1092" height="892" fill={WATER} />
      {AREAS.map(([sheet, fill, d], i) => (
        <path key={i} transform={SHEETS[sheet]} d={d} fill={fill} />
      ))}
      <Strokes lines={PIERS} stroke="#dcdcda" strokeWidth="5" />

      {/* railway yards */}
      <g transform={SHEETS.nw}>
        <path d="M1435 30L1485 30 1530 240 1568 350 1568 560 1480 550 1470 420 1455 260Z" fill="#747474" />
        <path d="M1510 560L1560 560 1555 640 1515 640Z" fill="#6f6f6f" />
        <path d="M1518 600H1552V632H1518Z" fill="#7d83ad" />
        <path d="M1462 60L1500 300 1500 540M1478 90L1530 330 1535 540M1450 120L1485 330 1490 430M1500 200L1555 400 1555 540M1470 30L1515 300 1518 540" fill="none" stroke="#c9c9c9" strokeWidth="4.5" strokeDasharray="34 14 60 22" />
        <path d="M970 880L1080 910M975 900L1070 930M1200 830L1390 710M1170 850L1370 740M1060 920L980 1070M40 1220L160 1180 300 1190 400 1210M30 1240L170 1195M460 1225L820 1215M460 1240L820 1230" fill="none" stroke="#8b8b8b" strokeWidth="10" strokeDasharray="24 12" />
      </g>

      {ROAD_ORDER.map((kind) => (
        <g key={kind} fill="none" strokeLinejoin="round">
          {ROADS.filter((r) => r[1] === kind).map(([sheet, , d], i) => (
            <path key={"e" + i} transform={SHEETS[sheet]} d={d} stroke={ROAD_STYLE[kind].edge} strokeWidth={ROAD_STYLE[kind].w + ROAD_STYLE[kind].pad} />
          ))}
          {ROADS.filter((r) => r[1] === kind).map(([sheet, , d], i) => (
            <path key={"c" + i} transform={SHEETS[sheet]} d={d} stroke={ROAD_STYLE[kind].core} strokeWidth={ROAD_STYLE[kind].w} strokeLinecap="round" />
          ))}
        </g>
      ))}

      {/* bridges to Korkeasaari */}
      <g transform={SHEETS.ne} fill="none">
        <path d="M718 152C790 112 850 112 957 142M1158 150L1302 238" stroke="#3d3d3d" strokeWidth="38" />
        <path d="M718 152C790 112 850 112 957 142M1158 150L1302 238" stroke="#f6f6f6" strokeWidth="28" />
        <path d="M718 152C790 112 850 112 957 142M1158 150L1302 238M300 155L720 153M1350 240L1410 245 1540 295" stroke="#6f6f6f" strokeWidth="10" strokeDasharray="14 18" />
        <path d="M582 142H616V176H582ZM1316 220H1350V254H1316Z" fill="#7d86ae" />
        <circle cx="1100" cy="888" r="17" stroke="#747474" strokeWidth="5" />
        <path d="M1285 265Q1350 276 1420 265Q1460 280 1480 310L1540 360M1540 480Q1490 510 1460 560Q1400 575 1330 572L1320 550Q1285 530 1260 510Q1220 480 1215 440Q1225 405 1250 400L1230 385 1230 365 1250 360Q1250 300 1285 265" stroke="#7b5265" strokeWidth="6" />
        <path d="M1345 80L1360 230" stroke="#a5adab" strokeWidth="4" />
      </g>
      <path transform={SHEETS.sw} d="M1030 980L1080 1010 1100 1050 1080 1075 1140 1110 1155 1150M1005 1030L980 1090 1070 1085" fill="none" stroke="#b39a5c" strokeWidth="5" strokeDasharray="28 12" />

      <Strokes lines={TRAMS} stroke="#757472" strokeWidth="5.5" strokeLinejoin="round" />
      <Strokes lines={FOOTPATHS} stroke="#4444e6" strokeWidth="6.5" strokeDasharray="7 13" />
      <Strokes lines={FAINT} stroke="#9593b8" strokeWidth="5" strokeDasharray="8 18" />
      <Strokes lines={FERRIES} stroke="#7c84ea" strokeWidth="8" strokeDasharray="34 34" />
      <Strokes lines={FERRY_BUNDLE} stroke="#7379ec" strokeWidth="8" strokeDasharray="30 22" />

      {CROSSES.map(([x, y], i) => (
        <path key={i} d={`M${x} ${y - 7}V${y + 8}M${x - 5.5} ${y - 1}H${x + 5.5}`} stroke="#8aa68c" strokeWidth="3.5" />
      ))}
      {PEAKS.map(([x, y], i) => (
        <path key={i} d={`M${x} ${y - 7.5}L${x + 7.5} ${y + 6.5}H${x - 7.5}Z`} fill="#c4945a" />
      ))}

      <g fontFamily="'Noto Sans', sans-serif" fontWeight="500" stroke="#ffffff" strokeOpacity=".7" strokeWidth="4.5" strokeLinejoin="round" style={{ paintOrder: "stroke" }}>
        {LABELS.map(([text, x, y, width, size = 23, color = DARK, italic]) => (
          <text key={text} x={x} y={y} fontSize={size} fill={color} fontStyle={italic ? "italic" : "normal"} textLength={width} lengthAdjust="spacingAndGlyphs">
            {text}
          </text>
        ))}
      </g>
      <g fontFamily="'Noto Sans', sans-serif" fontSize="19.5" fontWeight="500" fill="#7b80ee">
        {ROUTE_LABELS.map(([id, text, d, length]) => (
          <g key={id}>
            <path id={id} d={d} fill="none" />
            <text textLength={length} lengthAdjust="spacingAndGlyphs">
              <textPath href={`#${id}`} textLength={length} lengthAdjust="spacingAndGlyphs">
                {text}
              </textPath>
            </text>
          </g>
        ))}
      </g>

      {/* marker with its shadow */}
      <defs>
        <linearGradient id="pin" x1="0" y1="0" x2="0" y2="1">
          <stop offset="0" stopColor="#5b9bd0" />
          <stop offset="1" stopColor="#2e6cbb" />
        </linearGradient>
        <linearGradient id="shade" x1="0" y1="1" x2="1" y2="0">
          <stop offset="0" stopColor="#000" stopOpacity=".55" />
          <stop offset="1" stopColor="#000" stopOpacity="0" />
        </linearGradient>
        <filter id="soft" x="-20%" y="-20%" width="140%" height="140%">
          <feGaussianBlur stdDeviation="2.5" />
        </filter>
      </defs>
      <path d="M1775 666L1793 630C1805 612 1830 610 1838 620C1842 632 1826 644 1812 650Z" fill="url(#shade)" filter="url(#soft)" />
      <g transform="translate(1750 586) scale(2)">
        <path d="M12.5.6C5.9.6.6 5.9.6 12.5c0 2.6 1 5 2 7.1L12.5 39.8l9.9-20.2c1-2.1 2-4.5 2-7.1C24.4 5.9 19.1.6 12.5.6z" fill="url(#pin)" stroke="#2f6da6" strokeWidth="1.1" />
        <circle cx="12.5" cy="12.7" r="4.7" fill="#fff" stroke="#3b75ae" strokeWidth="1.1" />
      </g>
    </svg>
  );
}

function ZoomControl() {
  return (
    <div className="absolute top-5 left-5 flex w-[68px] flex-col overflow-hidden rounded-lg border-4 border-black/20 bg-clip-padding">
      <button className="flex h-[60px] items-center justify-center border-b-2 border-[#ccc] bg-white pt-3 pl-0.5" aria-label="Zoom in">
        <svg width="26" height="26" viewBox="0 0 26 26" stroke="#000" strokeWidth="4.6"><path d="M.5 13H25.5M13 1V25" /></svg>
      </button>
      <button className="flex h-[60px] items-center justify-center bg-white pt-2.5 pl-0.5" aria-label="Zoom out">
        <svg width="26" height="26" viewBox="0 0 26 26" stroke="#000" strokeWidth="4.6"><path d="M.5 13H25.5" /></svg>
      </button>
    </div>
  );
}

function Attribution() {
  return (
    <div className="absolute right-0 bottom-0 flex h-[33px] w-[583px] items-center justify-end bg-white/80 pr-[10px] text-[24px] leading-[33px] tracking-[0.18px] whitespace-pre text-[#333]">
      <span className="mr-[7px] flex h-4 w-6 flex-col">
        <span className="h-2 bg-[#4c7be1]" />
        <span className="h-1.5 bg-[#ffd500]/80" />
        <span className="h-0.5 bg-[#e0bc00]" />
      </span>
      <span className="text-[#2a7aa8]">Leaflet</span>
      <span> | Map data © </span>
      <span className="text-[#2a7aa8]">OpenStreetMap</span>
      <span> contributors</span>
    </div>
  );
}

/* ------------------------------------------------------------------ */
/* Page                                                                */
/* ------------------------------------------------------------------ */

function NavButton({ children, className }: { children: string; className: string }) {
  return (
    <button className={`flex h-[78px] items-center justify-center rounded-[10px] border-2 border-white pt-0.5 font-['Inter',sans-serif] text-[28px] font-medium tracking-[-0.018em] text-white ${className}`}>
      {children}
    </button>
  );
}

function Field({ label, value }: { label: string; value?: string }) {
  return (
    <p className="flex h-[67px] items-center">
      {label}
      {value && <span className="ml-5">{value}</span>}
    </p>
  );
}

function Stats({ from, to }: { from: string; to: string }) {
  return (
    <ul className="-mt-px mb-px">
      {[["starting from the station:", from], ["ending at the station:", to]].map(([label, value]) => (
        <li key={label} className="flex h-16 items-center pl-[49px]">
          <span className="mr-[17px] h-[14px] w-[14px] rounded-full border-2 border-white/90" />
          {label}
          <span className="ml-5">{value}</span>
        </li>
      ))}
    </ul>
  );
}

export default function App() {
  return (
    <div className="flex h-[1466px] w-full flex-col overflow-hidden bg-[#f9faf8] font-['Liberation_Serif',serif] text-white">
      <header className="flex h-[117px] shrink-0 items-start justify-between bg-[#3f79c4] pt-[19px] pr-[129px] pl-[129px]">
        <NavButton className="w-[160px]">Home</NavButton>
        <nav className="flex gap-[30px]">
          <NavButton className="w-[170px]">Stations</NavButton>
          <NavButton className="w-[160px]">Trips</NavButton>
        </nav>
      </header>

      <main className="relative flex-1">
        <Wallpaper />
        <div className="relative flex items-start justify-center gap-[130px] pt-[100px]">
          <section className="h-[683px] w-[900px] rounded-[32px] border-4 border-[#3f79c4] bg-[#3f79c4]/89 bg-clip-padding px-10 pt-[31px] text-[36px] [-webkit-text-stroke:0.4px_white]">
            <h1 className="mb-[25px] text-center text-[54px] leading-[64px] font-bold">Viiskulma</h1>
            <Field label="Address:" value="Fredrikinkatu 19" />
            <Field label="Capacity:" value="14" />
            <Field label="Total number of journeys" />
            <Stats from="7207" to="7172" />
            <Field label="The average distance of a journey" />
            <Stats from="2.24 km" to="2.26 km" />
          </section>

          <section className="relative h-[900px] w-[1100px] overflow-hidden rounded-[32px] border-4 border-[#3f79c4] font-['Liberation_Sans',Arial,sans-serif]">
            <MapCanvas />
            <ZoomControl />
            <Attribution />
          </section>
        </div>
      </main>

      <footer className="flex h-[108px] shrink-0 items-start justify-end bg-[#3f79c4] bg-[radial-gradient(ellipse_1300px_70px_at_50%_108%,#396fb3_0%,#3f79c4_100%)] pt-[30px] pr-[135px]">
        <span className="mt-[13px] mr-4 text-[28px] leading-[28px] [-webkit-text-stroke:0.4px_white]">© City Bike</span>
        <svg width="48" height="47" viewBox="0 0 98 96" fill="#fff" aria-label="GitHub">
          <path fillRule="evenodd" clipRule="evenodd" d="M48.854 0C21.839 0 0 22 0 49.217c0 21.756 13.993 40.172 33.405 46.69 2.427.49 3.316-1.059 3.316-2.362 0-1.141-.08-5.052-.08-9.127-13.59 2.934-16.42-5.867-16.42-5.867-2.184-5.704-5.42-7.17-5.42-7.17-4.448-3.015.324-3.015.324-3.015 4.934.326 7.523 5.052 7.523 5.052 4.367 7.496 11.404 5.378 14.235 4.074.404-3.178 1.699-5.378 3.074-6.6-10.839-1.141-22.243-5.378-22.243-24.283 0-5.378 1.94-9.778 5.014-13.2-.485-1.222-2.184-6.275.486-13.038 0 0 4.125-1.304 13.426 5.052a46.97 46.97 0 0 1 12.214-1.63c4.125 0 8.33.571 12.213 1.63 9.302-6.356 13.427-5.052 13.427-5.052 2.67 6.763.97 11.816.485 13.038 3.155 3.422 5.015 7.822 5.015 13.2 0 18.905-11.404 23.06-22.324 24.283 1.78 1.548 3.316 4.481 3.316 9.126 0 6.6-.08 11.897-.08 13.526 0 1.304.89 2.853 3.316 2.364 19.412-6.52 33.405-24.935 33.405-46.691C97.707 22 75.788 0 48.854 0z" />
        </svg>
      </footer>
    </div>
  );
}
